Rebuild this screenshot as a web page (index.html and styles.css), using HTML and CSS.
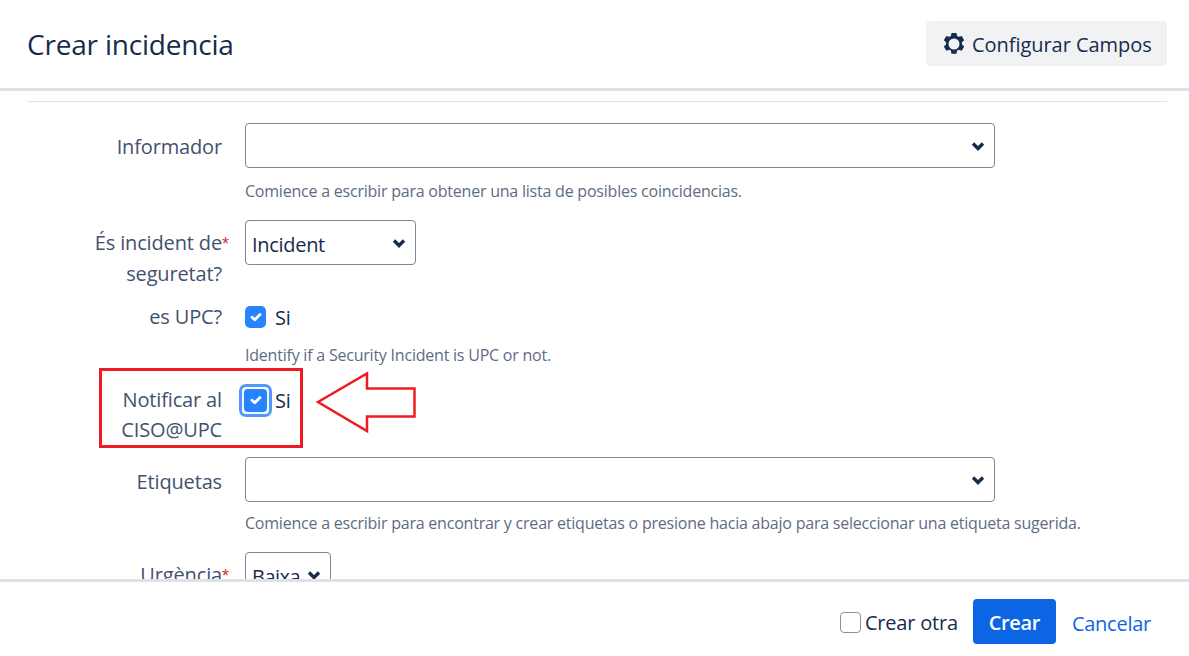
FILE: index.html
```html
<!DOCTYPE html>
<html lang="es">
<head>
<meta charset="utf-8">
<title>Crear incidencia</title>
<link rel="stylesheet" href="styles.css">
</head>
<body>
<div class="dialog">
  <header class="head">
    <h1 class="title">Crear incidencia</h1>
    <button class="config" type="button">
      <svg class="gear" viewBox="0 0 24 24" width="26" height="26" aria-hidden="true"><path fill-rule="evenodd" d="M9.700 1.800h4.600l.6 2.800c.5.2 1 .5 1.500.8l2.700-.9 2.300 4-2.100 1.900c.1.600.1 1.300 0 1.900l2.100 1.900-2.300 4-2.700-.9c-.5.300-1 .6-1.500.8l-.6 2.800H9.700l-.6-2.800c-.5-.2-1-.5-1.500-.8l-2.700.9-2.300-4 2.100-1.900c-.1-.6-.1-1.300 0-1.900L2.600 8.500l2.300-4 2.700.9c.5-.3 1-.6 1.500-.8l.6-2.800zM12 6.900a5.100 5.100 0 1 0 0 10.200 5.100 5.100 0 0 0 0-10.200z"/></svg>
      <span class="config-text">Configurar Campos</span>
    </button>
  </header>
  <main class="scroll">
    <div class="rule"></div>
    <div class="row row-informador">
      <label class="label">Informador</label>
      <div class="field">
        <div class="select select-wide"><svg class="chev" viewBox="0 0 14 10" width="14" height="10"><path d="M2 2.500l5 5 5-5"/></svg></div>
        <p class="help">Comience a escribir para obtener una lista de posibles coincidencias.</p>
      </div>
    </div>
    <div class="row row-seg">
      <label class="label">És incident de<span class="req">*</span> seguretat?</label>
      <div class="field">
        <div class="select select-incident"><span class="value">Incident</span><svg class="chev" viewBox="0 0 14 10" width="14" height="10"><path d="M2 2.500l5 5 5-5"/></svg></div>
      </div>
    </div>
    <div class="row row-upc">
      <label class="label">es UPC?</label>
      <div class="field">
        <div class="check-line">
          <span class="check"><svg viewBox="0 0 14 14" width="14" height="14"><path d="M3 7.300l2.800 2.500L11 4.500"/></svg></span>
          <span class="check-text">Si</span>
        </div>
        <p class="help help-upc">Identify if a Security Incident is UPC or not.</p>
      </div>
    </div>
    <div class="row row-ciso">
      <label class="label">Notificar al CISO@UPC</label>
      <div class="field">
        <div class="check-line">
          <span class="check check-focus"><svg viewBox="0 0 14 14" width="14" height="14"><path d="M3 7.300l2.800 2.500L11 4.500"/></svg></span>
          <span class="check-text">Si</span>
        </div>
      </div>
    </div>
    <div class="row row-etq">
      <label class="label">Etiquetas</label>
      <div class="field">
        <div class="select select-wide"><svg class="chev" viewBox="0 0 14 10" width="14" height="10"><path d="M2 2.500l5 5 5-5"/></svg></div>
        <p class="help">Comience a escribir para encontrar y crear etiquetas o presione hacia abajo para seleccionar una etiqueta sugerida.</p>
      </div>
    </div>
    <div class="row row-urg">
      <label class="label">Urgència<span class="req">*</span></label>
      <div class="field">
        <div class="select select-baixa"><span class="value">Baixa</span><svg class="chev" viewBox="0 0 14 10" width="14" height="10"><path d="M2 2.500l5 5 5-5"/></svg></div>
      </div>
    </div>
  </main>
  <footer class="foot">
    <label class="other"><span class="box"></span><span>Crear otra</span></label>
    <button class="primary" type="button">Crear</button>
    <a class="cancel" href="#">Cancelar</a>
  </footer>
  <svg class="mark" width="1189" height="656" viewBox="0 0 1189 656" aria-hidden="true">
    <rect x="100.500" y="369.500" width="201" height="77"/>
    <path d="M318 402L367 373.500V388.500H414.500V416.500H367V431z"/>
  </svg>
</div>
</body>
</html>
```
FILE: styles.css
```css
* { box-sizing: border-box; }
html, body { margin: 0; height: 100%; overflow: hidden; background: #fff; }
body { font-family: "Open Sans", "Noto Sans", "Liberation Sans", sans-serif; color: #172b4d; }
.dialog { position: relative; display: flex; flex-direction: column; width: 1189px; height: 656px; }
.head {
  flex: none; height: 91px; display: flex; align-items: center; justify-content: space-between;
  padding: 0 22px 1px 27px; border-bottom: 3px solid #dfe1e6;
}
.title { margin: 0; font-size: 28px; font-weight: 400; line-height: 36px; letter-spacing: -.2px; }
.config {
  display: flex; align-items: center; gap: 5px; width: 241px; height: 45px; padding: 0 0 0 15px;
  border: 0; border-radius: 4px; background: #f1f2f4; color: #172b4d;
  font: 400 20px/28px "Open Sans", sans-serif; letter-spacing: -.05px;
}
.config-text { padding-top: 2px; }
.gear { fill: #172b4d; flex: none; }
.scroll { flex: 1; min-height: 0; overflow: hidden; padding: 10px 22px 0 27px; }
.rule { height: 1px; background: #dfe1e6; }
.row { display: grid; grid-template-columns: 195px 1fr; column-gap: 23px; }
.label { font-size: 20px; line-height: 30px; text-align: right; color: #42526e; letter-spacing: -.15px; }
.req { display: inline-block; width: 9px; margin-right: -9px; color: #c9372c; font-size: 18px; font-family: "Liberation Sans", sans-serif; text-align: left; letter-spacing: 0; }
.select {
  display: flex; align-items: center; justify-content: space-between; height: 45px;
  padding: 0 9px 0 6px; border: 1px solid #7a869a; border-radius: 4px;
  font-size: 20px; letter-spacing: -.3px; color: #172b4d; background: #fff;
}
.value { padding-top: 3px; }
.select-wide { width: 750px; justify-content: flex-end; }
.select-incident { width: 171px; }
.select-baixa { width: 86px; padding-right: 9px; letter-spacing: -.5px; }
.chev { flex: none; }
.chev path { fill: none; stroke: #172b4d; stroke-width: 3.400; }
.help { margin: 12px 0 0; font-size: 16px; line-height: 23px; color: #5e6c84; letter-spacing: -.22px; }
.row-informador { margin-top: 21px; height: 97px; }
.row-informador .label { padding-top: 9px; }
.row-seg { height: 82px; }
.row-seg .label { padding-top: 8px; }
.row-upc { height: 83px; }
.check-line { display: flex; align-items: center; gap: 9px; height: 30px; font-size: 20px; letter-spacing: -.3px; }
.check {
  display: flex; align-items: center; justify-content: center; width: 21px; height: 22px;
  border-radius: 5px; background: #2684ff; flex: none;
}
.check svg path { fill: none; stroke: #fff; stroke-width: 2.800; stroke-linecap: round; stroke-linejoin: round; }
.row-upc .help-upc { margin-top: 12px; }
.row-ciso { height: 72px; }
.row-ciso .check-line { gap: 3px; margin-left: -6px; }
.check-focus { width: 33px; height: 33px; border: 3px solid #4c9aff; border-radius: 7px; background: #fff; position: relative; }
.check-focus::before { content: ""; position: absolute; inset: 2px; border-radius: 4px; background: #2684ff; }
.check-focus svg { position: relative; }
.row-etq { height: 95px; }
.row-etq .label { padding-top: 10px; }
.row-etq .help { margin-top: 10px; }
.row-urg .label { padding-top: 8px; }
.foot {
  flex: none; height: 77px; display: flex; align-items: center; justify-content: flex-end;
  padding: 4px 38px 0 0; border-top: 3px solid #dfe1e6; background: #fff; position: relative;
}
.other { display: flex; align-items: center; gap: 5px; font-size: 20px; letter-spacing: -.2px; margin: 2px 15px 0 0; }
.box { width: 21px; height: 21px; border: 1px solid #8993a4; border-radius: 4px; background: #fff; margin-right: -1px; }
.primary {
  width: 83px; height: 45px; padding: 3px 0 0; border: 0; border-radius: 4px; background: #0c66e4; color: #fff;
  font: 600 20px/28px "Open Sans", sans-serif; letter-spacing: -.4px;
}
.cancel { margin: 4px 0 0 16px; font-size: 20px; color: #0c66e4; text-decoration: none; letter-spacing: -.25px; }
.mark { position: absolute; left: 0; top: 0; pointer-events: none; }
.mark rect, .mark path { fill: none; stroke: #ed1c24; stroke-width: 3; }
.mark path { stroke-width: 2.500; }
```
